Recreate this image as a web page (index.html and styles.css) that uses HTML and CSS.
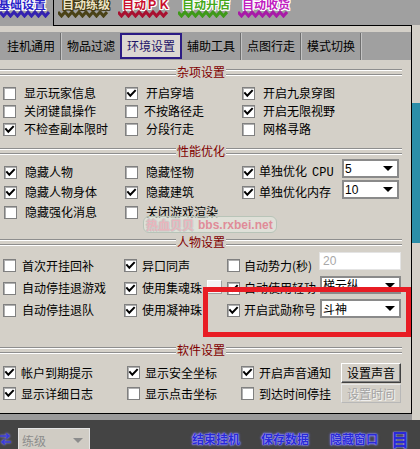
FILE: index.html
```html
<!DOCTYPE html>
<html lang="zh-CN">
<head>
<meta charset="utf-8">
<title>环境设置</title>
<link rel="stylesheet" href="styles.css">
</head>
<body>
<div class="screen">
  <div class="upper">
    <div class="window">
      <div class="toptabs">
        <div class="ttab t1"><span class="tt">基础设置</span><svg class="zig" viewBox="0 0 50 8" width="50" height="8"><polyline points="0,2 3.5,6 7,2 10.5,6 14,2 17.5,6 21,2 24.5,6 28,2 31.5,6 35,2 38.5,6 42,2 45.5,6 49,2"/></svg></div>
        <div class="ttrest">
          <div class="ttab t2"><span class="tt">自动练级</span><svg class="zig" viewBox="0 0 50 8" width="50" height="8"><polyline points="0,2 3.5,6 7,2 10.5,6 14,2 17.5,6 21,2 24.5,6 28,2 31.5,6 35,2 38.5,6 42,2 45.5,6 49,2"/></svg></div>
          <div class="ttab t3"><span class="tt">自动ＰＫ</span><svg class="zig" viewBox="0 0 50 8" width="50" height="8"><polyline points="0,2 3.5,6 7,2 10.5,6 14,2 17.5,6 21,2 24.5,6 28,2 31.5,6 35,2 38.5,6 42,2 45.5,6 49,2"/></svg></div>
          <div class="ttab t4"><span class="tt">自动开店</span><svg class="zig" viewBox="0 0 50 8" width="50" height="8"><polyline points="0,2 3.5,6 7,2 10.5,6 14,2 17.5,6 21,2 24.5,6 28,2 31.5,6 35,2 38.5,6 42,2 45.5,6 49,2"/></svg></div>
          <div class="ttab t5"><span class="tt">自动收货</span><svg class="zig" viewBox="0 0 50 8" width="50" height="8"><polyline points="0,2 3.5,6 7,2 10.5,6 14,2 17.5,6 21,2 24.5,6 28,2 31.5,6 35,2 38.5,6 42,2 45.5,6 49,2"/></svg></div>
        </div>
      </div>
      <div class="frame">
        <div class="band"></div>
        <div class="subtabs">
          <span class="st">挂机通用</span><i class="sep"></i>
          <span class="st">物品过滤</span>
          <span class="st cur">环境设置</span>
          <span class="st">辅助工具</span><i class="sep"></i>
          <span class="st">点图行走</span><i class="sep"></i>
          <span class="st">模式切换</span><i class="sep"></i>
        </div>
        <div class="panel">
          <div class="hdr hd1"><span>杂项设置</span></div>
          <div class="grid s1">
            <div class="chk"><i class="box"></i>显示玩家信息</div>
            <div class="chk"><i class="box on"><svg viewBox="0 0 11 11"><path d="M2 5.2 L4.3 7.8 L9 2.8"/></svg></i>开启穿墙</div>
            <div class="chk"><i class="box on"><svg viewBox="0 0 11 11"><path d="M2 5.2 L4.3 7.8 L9 2.8"/></svg></i>开启九泉穿图</div>
            <div class="chk"><i class="box"></i>关闭键鼠操作</div>
            <div class="chk g6"><i class="box"></i>不按路径走</div>
            <div class="chk"><i class="box on"><svg viewBox="0 0 11 11"><path d="M2 5.2 L4.3 7.8 L9 2.8"/></svg></i>开启无限视野</div>
            <div class="chk"><i class="box on"><svg viewBox="0 0 11 11"><path d="M2 5.2 L4.3 7.8 L9 2.8"/></svg></i>不检查副本限时</div>
            <div class="chk"><i class="box"></i>分段行走</div>
            <div class="chk"><i class="box"></i>网格寻路</div>
          </div>

          <div class="hdr hd2"><span>性能优化</span></div>
          <div class="grid s2">
            <div class="chk"><i class="box on"><svg viewBox="0 0 11 11"><path d="M2 5.2 L4.3 7.8 L9 2.8"/></svg></i>隐藏人物</div>
            <div class="chk"><i class="box"></i>隐藏怪物</div>
            <div class="chk g4 wide"><i class="box on"><svg viewBox="0 0 11 11"><path d="M2 5.2 L4.3 7.8 L9 2.8"/></svg></i><span>单独优化<span class="mono">CPU</span></span><span class="dd w57 up3"><span class="num">5</span><i class="arr"></i></span></div>
            <div class="chk"><i class="box on"><svg viewBox="0 0 11 11"><path d="M2 5.2 L4.3 7.8 L9 2.8"/></svg></i>隐藏人物身体</div>
            <div class="chk"><i class="box on"><svg viewBox="0 0 11 11"><path d="M2 5.2 L4.3 7.8 L9 2.8"/></svg></i>隐藏建筑</div>
            <div class="chk g4 wide"><i class="box on"><svg viewBox="0 0 11 11"><path d="M2 5.2 L4.3 7.8 L9 2.8"/></svg></i>单独优化内存<span class="dd w57 up2"><span class="num">10</span><i class="arr"></i></span></div>
            <div class="chk"><i class="box"></i>隐藏强化消息</div>
            <div class="chk"><i class="box"></i>关闭游戏渲染</div>
          </div>

          <div class="hdr hd3"><span>人物设置</span></div>
          <div class="grid s3">
            <div class="chk g6"><i class="box"></i>首次开挂回补</div>
            <div class="chk g5"><i class="box on"><svg viewBox="0 0 11 11"><path d="M2 5.2 L4.3 7.8 L9 2.8"/></svg></i>异口同声</div>
            <div class="chk g4 wide"><i class="box"></i>自动势力(秒)<span class="inp up2">20</span></div>
            <div class="chk g6"><i class="box"></i>自动停挂退游戏</div>
            <div class="chk g5 wide"><i class="box on"><svg viewBox="0 0 11 11"><path d="M2 5.2 L4.3 7.8 L9 2.8"/></svg></i>使用集魂珠<span class="mini"></span></div>
            <div class="chk g4 wide"><i class="box on"><svg viewBox="0 0 11 11"><path d="M2 5.2 L4.3 7.8 L9 2.8"/></svg></i>自动使用轻功<span class="dd w81 up1">梯云纵<i class="arr"></i></span></div>
            <div class="chk g6"><i class="box"></i>自动停挂退队</div>
            <div class="chk g5"><i class="box on"><svg viewBox="0 0 11 11"><path d="M2 5.2 L4.3 7.8 L9 2.8"/></svg></i>使用凝神珠</div>
            <div class="chk g4 wide"><i class="box on"><svg viewBox="0 0 11 11"><path d="M2 5.2 L4.3 7.8 L9 2.8"/></svg></i>开启武勋称号<span class="dd w81 tall">斗神<i class="arr"></i></span></div>
          </div>

          <div class="hdr hd4"><span>软件设置</span></div>
          <div class="grid s4">
            <div class="chk"><i class="box on"><svg viewBox="0 0 11 11"><path d="M2 5.2 L4.3 7.8 L9 2.8"/></svg></i>帐户到期提示</div>
            <div class="chk"><i class="box on"><svg viewBox="0 0 11 11"><path d="M2 5.2 L4.3 7.8 L9 2.8"/></svg></i>显示安全坐标</div>
            <div class="chk wide"><i class="box on"><svg viewBox="0 0 11 11"><path d="M2 5.2 L4.3 7.8 L9 2.8"/></svg></i>开启声音通知<span class="btn">设置声音</span></div>
            <div class="chk"><i class="box on"><svg viewBox="0 0 11 11"><path d="M2 5.2 L4.3 7.8 L9 2.8"/></svg></i>显示详细日志</div>
            <div class="chk"><i class="box"></i>显示点击坐标</div>
            <div class="chk wide"><i class="box"></i>到达时间停挂<span class="btn off">设置时间</span></div>
          </div>

          <div class="watermark"><span class="wm-cn">热血贝贝</span><span class="wm-en">bbs.rxbei.net</span></div>
        </div>
      </div>
      <div class="greyband"></div>
    </div>
    <div class="strip"></div>
  </div>
  <div class="bottombar">
    <svg class="swap" viewBox="0 0 11 14" width="11" height="14"><path d="M0 4 H9 M6 1.5 L9 4 L6 6.5 M11 10 H2 M5 7.5 L2 10 L5 12.5"/></svg>
    <span class="combo">练级<i class="arr grey"></i></span>
    <span class="gbtn b1">结束挂机</span>
    <span class="gbtn b2">保存数据</span>
    <span class="gbtn b3">隐藏窗口</span>
    <span class="gicon">目</span>
  </div>
  <div class="redbox"></div>
</div>
</body>
</html>
```

FILE: styles.css
```css
* { box-sizing: border-box; margin: 0; padding: 0; }
html, body { width: 420px; height: 449px; overflow: hidden; }
body {
  font-family: "Noto Sans CJK SC", "Noto Sans", sans-serif;
  font-size: 12px;
  color: #000;
  background: #d4d0c8;
}
i { font-style: normal; display: block; }

.screen { position: relative; width: 420px; height: 449px; display: flex; flex-direction: column; }
.upper { display: flex; height: 420px; }
.window { width: 412px; display: flex; flex-direction: column; }

/* top image tabs */
.toptabs { display: flex; height: 26px; background: #a0a0a0; }
.ttab { display: flex; flex-direction: column; height: 25px; overflow: hidden; }
.ttab .tt {
  --o: #fff;
  font-size: 12px; font-weight: bold; line-height: 14px; height: 13px;
  margin-top: -3px; white-space: nowrap;
  text-shadow: 1px 0 var(--o), -1px 0 var(--o), 0 1px var(--o), 0 -1px var(--o),
               1px 1px var(--o), -1px -1px var(--o), 1px -1px var(--o), -1px 1px var(--o);
}
.zig { display: block; margin-top: 0; }
.zig polyline { fill: none; stroke-width: 3; stroke-linejoin: miter; }
.t1 { width: 53px; }
.t1 .tt { margin-left: -2px; color: #2a22c8; }
.t1 .zig polyline { stroke: #3322b0; }
.ttrest { flex: 1; display: flex; gap: 1px; padding-left: 3px; border-left: 1px solid #000; border-bottom: 1px solid #000; }
.ttrest .ttab { width: 59px; padding-left: 5px; }
.ttrest .zig { margin-left: -4px; }
.t2 .tt { color: #ece4c4; --o: #3c3410; }
.t2 .zig polyline { stroke: #4a4216; }
.t3 .tt { color: #c8102e; }
.t3 .zig polyline { stroke: #a81030; }
.t4 .tt { color: #46a81a; }
.t4 .zig polyline { stroke: #3e9a18; }
.t5 .tt { color: #c020c0; }
.t5 .zig polyline { stroke: #a81aa8; }

/* frame */
.frame { display: flex; flex-direction: column; border-right: 1px solid #000; border-bottom: 1px solid #000; }
.band { height: 6px; background: #d4d0c8; }
.subtabs { height: 28px; background: #a0a0a0; display: flex; align-items: center; padding-left: 2px; }
.st { width: 58px; text-align: center; line-height: 14px; white-space: nowrap; }
.st.cur {
  width: 62px; height: 26px; border: 2px solid #2c1c84; background: #dcd8d2;
  display: flex; align-items: center; justify-content: center; color: #1c1468;
}
.sep { width: 2px; align-self: stretch; margin: 1px 0 0; border-left: 1px solid #6e6e6e; border-right: 1px solid #c4c4c4; }

/* panel */
.panel { position: relative; height: 353px; background: #d4d0c8; padding-top: 5px; }
.hdr { display: flex; align-items: center; width: 402px; height: 14px; line-height: 14px; color: #800000; }
.hdr::before, .hdr::after {
  content: ""; flex: 1; height: 14px;
  background: linear-gradient(transparent 0 4px, #8e8e8e 4px 5px, #fff 5px 6px, transparent 6px 9px, #8e8e8e 9px 10px, #fff 10px 11px, transparent 11px);
}
.hdr span { padding: 0 1px; white-space: nowrap; }
.hd2 { margin-top: 6px; }
.hd3 { margin-top: 13px; }
.hd4 { margin-top: 22px; }

.grid { display: grid; }
.s1 { margin-top: 5px; padding-left: 3px; grid-template-columns: 122px 117px 160px; grid-auto-rows: 18px; }
.s2 { margin-top: 4px; padding-left: 4px; grid-template-columns: 121px 117px 157px; grid-auto-rows: 20px; }
.s3 { margin-top: 5px; padding-left: 3px; grid-template-columns: 121px 103px 174px; grid-template-rows: 23px 22px 22px; }
.s4 { margin-top: 5px; padding-left: 3px; grid-template-columns: 124px 114px 160px; grid-auto-rows: 21px; }

.chk { display: flex; align-items: center; gap: 8px; white-space: nowrap; line-height: 14px; }
.s4 .chk { gap: 5px; }
.chk.g6 { gap: 6px; }
.chk.g5 { gap: 5px; }
.chk.g4 { gap: 4px; }
.box {
  width: 13px; height: 13px; flex: none; background: #fff;
  border: 1px solid #808080; box-shadow: inset 1px 1px 0 #b0b0b0;
  display: flex; align-items: center; justify-content: center;
}
.box svg { width: 11px; height: 11px; }
.box svg path { fill: none; stroke: #000; stroke-width: 2; stroke-linecap: square; stroke-linejoin: miter; }
.mono { font-family: "Liberation Mono", monospace; font-size: 12px; margin-left: 5px; }

.wide .dd, .wide .inp, .wide .btn, .wide .mini { margin-left: auto; }
.dd {
  display: flex; align-items: center; justify-content: space-between;
  height: 19px; background: #fff; border: 2px solid #8a8a8a;
  padding: 0 4px 0 1px; align-self: flex-start;
}
.w57 { width: 57px; }
.w81 { width: 81px; height: 18px; }
.dd.tall { height: 19px; margin-top: 0; }
.num { font-family: "Liberation Sans", sans-serif; font-size: 12px; }
.up3 { margin-top: -3px; }
.up2 { margin-top: -2px; }
.up1 { margin-top: -1px; }
.arr { width: 0; height: 0; border-left: 5px solid transparent; border-right: 5px solid transparent; border-top: 5px solid #000; }
.arr.grey { border-top-color: #8c8c8c; }
.inp {
  width: 82px; height: 18px; align-self: flex-start; background: #fff;
  border: 1px solid #e4e4e4; color: #a8a8a8; padding-left: 3px;
  font-family: "Liberation Sans", sans-serif; font-size: 12px; line-height: 16px;
}
.mini {
  width: 17px; height: 14px; margin-right: 5px; margin-top: -3px;
  background: #f4f4f4; border: 1px solid #a0a0a0; border-top-color: #fff; border-left-color: #fff;
}
.btn {
  width: 60px; height: 20px; display: flex; align-items: center; justify-content: center;
  background: #d4d0c8; border: 1px solid; border-color: #fff #404040 #404040 #fff;
  box-shadow: inset -1px -1px 0 #808080;
}
.btn.off { height: 19px; color: #a4a4a4; border-color: #e8e8e8 #b8b8b8 #b8b8b8 #e8e8e8; box-shadow: none; text-shadow: 1px 1px 0 #f4f4f4; }

.watermark {
  position: absolute; left: 143px; top: 156px; width: 134px; height: 17px;
  display: flex; align-items: center; gap: 4px; padding-left: 2px;
  border: 1px solid #b8c4b8; border-radius: 6px; background: rgba(232, 236, 230, 0.55);
  font-weight: bold; line-height: 14px; white-space: nowrap;
}
.wm-cn { color: #e8b4bc; text-shadow: 1px 0 #c8ccc8, -1px 0 #c8ccc8, 0 1px #c8ccc8, 0 -1px #c8ccc8; }
.wm-en { color: #e08c98; font-family: "Liberation Sans", sans-serif; font-size: 12px; }

.greyband { height: 6px; background: #9a9a9a; }
.strip {
  width: 8px;
  background: linear-gradient(#a0a0a0 0 25px, #d4d0c8 25px 103px, #2b8ea8 103px 243px, #d4d0c8 243px);
}

/* bottom bar */
.bottombar { flex: 1; background: #444; display: flex; align-items: flex-start; }
.swap { margin-top: 12px; flex: none; }
.swap path { fill: none; stroke: #3a3ad8; stroke-width: 1.6; }
.swap { filter: drop-shadow(0 0 1px #a0a0ff); }
.combo {
  margin-left: 7px; margin-top: 8px; width: 72px; height: 22px;
  display: flex; align-items: center; justify-content: space-between;
  padding: 2px 6px 0 3px; background: #d0ccc4; border: 1px solid #e4e4e4; border-bottom: none;
  color: #8c8c8c;
}
.gbtn {
  margin-top: 12px; line-height: 14px; font-weight: bold; color: #2a2ad8; white-space: nowrap;
  text-shadow: 0 0 1px #d0d0ff, 0 0 2px #8c8cff, 0 0 3px #6a6aff;
}
.b1 { margin-left: 102px; }
.b2 { margin-left: 21px; }
.b3 { margin-left: 21px; }
.gicon {
  margin-left: 13px; margin-top: 10px; font-size: 18px; line-height: 18px; font-weight: bold;
  color: #2a2ad8; text-shadow: 0 0 1px #d0d0ff, 0 0 2px #8c8cff;
}

.redbox {
  position: absolute; left: 203px; top: 287px; width: 208px; height: 50px;
  border: 5px solid #e81c24;
}
```
